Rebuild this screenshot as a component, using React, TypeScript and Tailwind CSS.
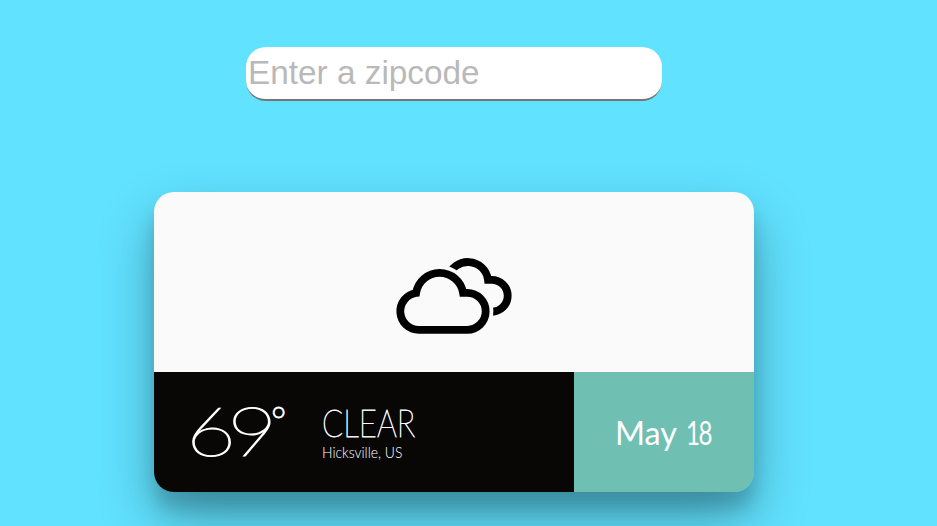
import React from "react";

const FRONT_CLOUD =
  "M418.8 329.8A18.5 18.5 0 0 1 416.1 293A23.8 23.8 0 0 1 463.1 292.8H467.2A18.5 18.5 0 0 1 467.2 329.8Z";

function CloudyIcon() {
  return (
    <svg width="120" height="80" viewBox="394 256 120 80" fill="none" stroke="#000" strokeWidth="7.8">
      <path d="M448.3 277.5A20.2 20.2 0 0 1 488 279.8H491.7A16 16 0 0 1 491.7 311.8H488" />
      {/* gap between the two clouds */}
      <path d={FRONT_CLOUD} stroke="#fafafa" strokeWidth="15.4" />
      <path d={FRONT_CLOUD} />
    </svg>
  );
}

export default function App() {
  return (
    <main className="h-[526px] w-full overflow-hidden bg-[#61e2ff] font-['Lato',sans-serif]">
      <div className="flex w-[908px] flex-col items-center pt-[47px]">
        <input
          type="text"
          placeholder="Enter a zipcode"
          className="h-[54px] w-[416px] rounded-[20px] border-b-2 border-[#767676] bg-white px-0.5 font-['Liberation_Sans',Arial,sans-serif] text-[33.33px] leading-none outline-none placeholder:text-[#b9b9b9]"
        />
        <section className="mt-[91px] h-[300px] w-[600px] overflow-hidden rounded-[20px] shadow-[0_27px_55px_0_rgba(0,0,0,0.3),0_17px_17px_0_rgba(0,0,0,0.15)]">
          <div className="flex h-[180px] items-center justify-center bg-[#fafafa] pt-7">
            <CloudyIcon />
          </div>
          <div className="flex h-[120px] text-white">
            <div className="flex w-[420px] bg-[#080705]">
              <div className="flex w-[168px] items-start pl-[32px] pt-[23px]">
                <span className="w-[85px] origin-left scale-x-[1.25] whitespace-nowrap text-[69px] leading-[70px] font-thin tracking-[-7px] [-webkit-text-stroke:1.2px_white]">
                  69
                </span>
                <span className="pt-[6px] text-[37px] leading-[38px] font-thin [-webkit-text-stroke:1.4px_white]">°</span>
              </div>
              <div className="flex flex-col items-start pt-[30px]">
                <span className="origin-left scale-x-[0.83] whitespace-nowrap text-[37.5px] leading-[41px] font-thin [-webkit-text-stroke:0.8px_white]">
                  CLEAR
                </span>
                <span className="origin-left scale-x-[0.87] whitespace-nowrap text-[16px] leading-[18px] font-light">
                  Hicksville, US
                </span>
              </div>
            </div>
            <div className="flex w-[180px] items-center bg-[#70bfb3] pl-[41px] text-[33px] leading-[40px]">
              <span className="origin-left scale-x-[0.98] whitespace-nowrap">May</span>
              <span className="ml-[8px] origin-left scale-x-[0.73] whitespace-nowrap tracking-[-2px]">18</span>
            </div>
          </div>
        </section>
      </div>
    </main>
  );
}
